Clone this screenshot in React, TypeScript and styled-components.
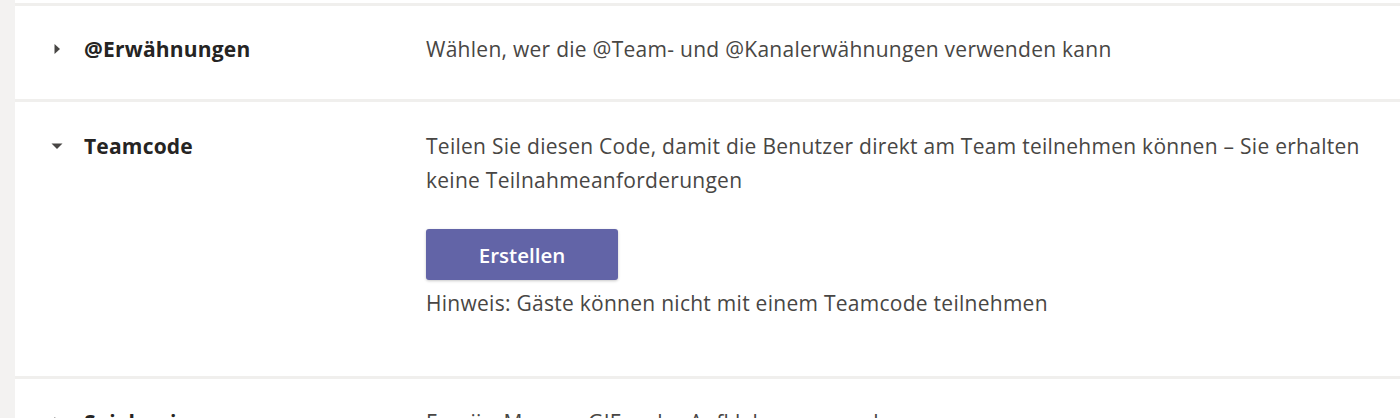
import React from "react";
import styled, { createGlobalStyle } from "styled-components";

const Global = createGlobalStyle`
  html, body { margin: 0; padding: 0; background: #ffffff; }
  body { font-family: "Open Sans", "Noto Sans", sans-serif; overflow: hidden; }
`;

const Page = styled.div`
  display: flex;
  width: 1400px;
  height: 418px;
  overflow: hidden;
`;

const SideStrip = styled.div`
  width: 15px;
  flex: none;
  background: #f3f2f1;
`;

const Main = styled.div`
  flex: 1;
  display: flex;
  flex-direction: column;
  padding-top: 3px;
  background: #ffffff;
`;

const Separator = styled.div`
  height: 3px;
  flex: none;
  background: #f0efed;
`;

const Row = styled.div<{ $pt: number; $pb: number }>`
  display: grid;
  grid-template-columns: 69px 342px 1fr;
  padding: ${(p) => p.$pt}px 28px ${(p) => p.$pb}px 0;
  flex: none;
`;

const Toggle = styled.div`
  display: flex;
  align-items: center;
  padding-left: 36px;
  height: 34px;
`;

const CaretBox = styled.span`
  display: flex;
  align-items: center;
  justify-content: center;
  width: 12px;
`;

const Title = styled.div`
  font-size: 21px;
  font-weight: 700;
  letter-spacing: 0.2px;
  line-height: 34px;
  color: #252423;
  white-space: nowrap;
`;

const Desc = styled.div`
  font-size: 21px;
  letter-spacing: 0.27px;
  line-height: 34px;
  color: #484644;
`;

const CreateButton = styled.button`
  display: block;
  margin-top: 32px;
  margin-bottom: 6px;
  width: 192px;
  height: 51px;
  padding: 0;
  border: none;
  border-radius: 3px;
  background: #6264a7;
  color: #ffffff;
  font-family: "Open Sans", "Noto Sans", sans-serif;
  font-size: 20.5px;
  font-weight: 600;
  box-shadow: 0 1px 3px rgba(0, 0, 0, 0.22);
  cursor: pointer;
`;

const Caret = ({ open }: { open: boolean }) =>
  open ? (
    <svg width="12" height="8" viewBox="0 0 12 8">
      <path d="M0.5 1.5 L11.5 1.5 L6 7 Z" fill="#484644" />
    </svg>
  ) : (
    <svg width="8" height="12" viewBox="0 0 8 12">
      <path d="M1.5 1 L7 6 L1.5 11 Z" fill="#484644" />
    </svg>
  );

export default function App() {
  return (
    <>
      <Global />
      <Page>
        <SideStrip />
        <Main>
          <Separator />
          <Row $pt={26} $pb={33}>
            <Toggle>
              <CaretBox>
                <Caret open={false} />
              </CaretBox>
            </Toggle>
            <Title>@Erwähnungen</Title>
            <Desc>Wählen, wer die @Team- und @Kanalerwähnungen verwenden kann</Desc>
          </Row>
          <Separator />
          <Row $pt={27} $pb={56}>
            <Toggle>
              <CaretBox>
                <Caret open={true} />
              </CaretBox>
            </Toggle>
            <Title>Teamcode</Title>
            <div>
              <Desc>
                Teilen Sie diesen Code, damit die Benutzer direkt am Team teilnehmen können – Sie erhalten keine
                Teilnahmeanforderungen
              </Desc>
              <CreateButton>Erstellen</CreateButton>
              <Desc>Hinweis: Gäste können nicht mit einem Teamcode teilnehmen</Desc>
            </div>
          </Row>
          <Separator />
          <Row $pt={25.5} $pb={40}>
            <Toggle>
              <CaretBox>
                <Caret open={false} />
              </CaretBox>
            </Toggle>
            <Title>Spielereien</Title>
            <Desc>Emojis, Memes, GIFs oder Aufkleber verwenden</Desc>
          </Row>
        </Main>
      </Page>
    </>
  );
}
